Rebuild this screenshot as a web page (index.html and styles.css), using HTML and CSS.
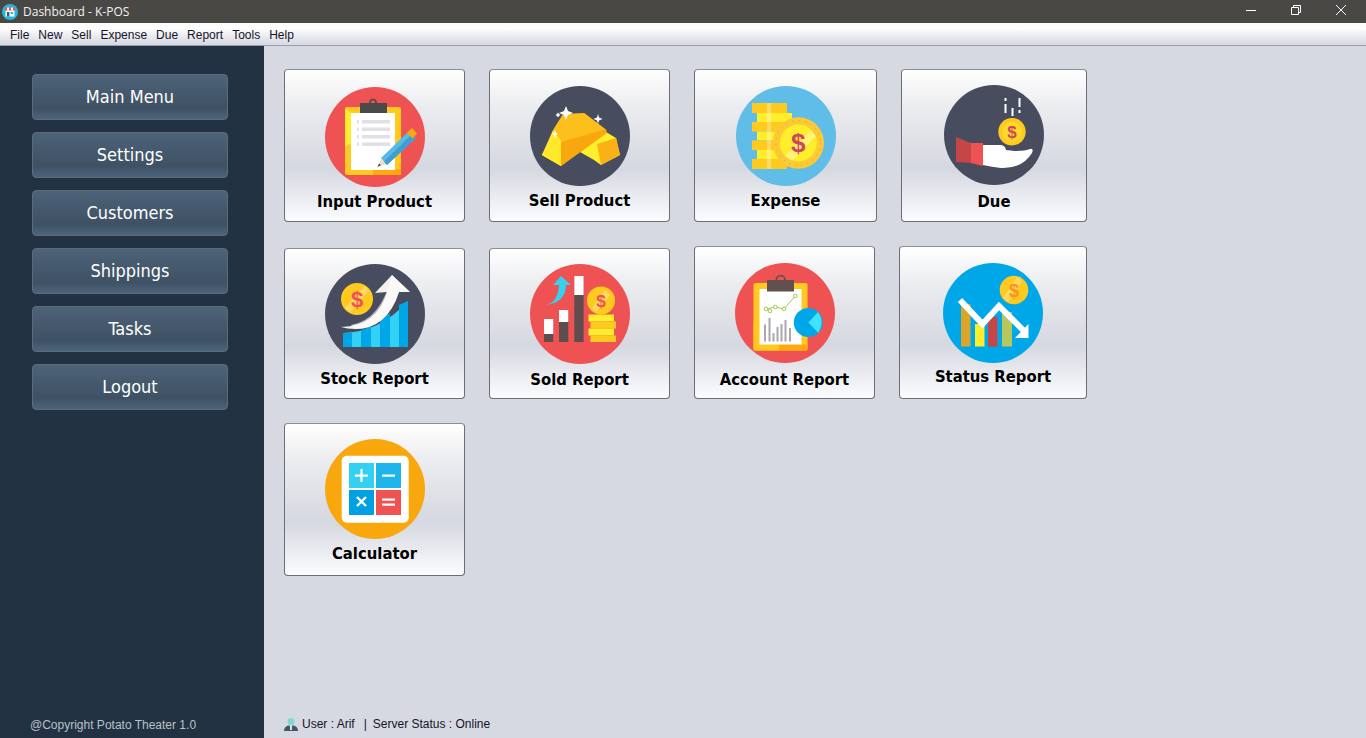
FILE: index.html
```html
<!DOCTYPE html>
<html lang="en">
<head>
<meta charset="utf-8">
<title>Dashboard - K-POS</title>
<link rel="stylesheet" href="styles.css">
</head>
<body>
<div class="app">
  <header class="titlebar">
    <div class="title-left">
      <svg class="app-icon" viewBox="0 0 16 16"><circle cx="8" cy="8" r="8" fill="#22b8d8"/><rect x="3.5" y="6" width="9" height="6.5" fill="#fff"/><rect x="3" y="3.5" width="10" height="3" fill="#ee5253"/><rect x="5" y="3.5" width="2" height="3" fill="#fff"/><rect x="9" y="3.5" width="2" height="3" fill="#fff"/><rect x="5" y="8" width="2.4" height="4.5" fill="#2c5d7a"/><rect x="8.6" y="8" width="2.6" height="2" fill="#22b8d8"/></svg>
      <span class="title-text">Dashboard - K-POS</span>
    </div>
    <div class="win-controls">
      <span class="win-btn"><svg width="12" height="12" viewBox="0 0 12 12"><path d="M1 6.5H11" stroke="#fff" fill="none"/></svg></span>
      <span class="win-btn"><svg width="12" height="12" viewBox="0 0 12 12"><path d="M1.5 3.5H8.5V10.5H1.5ZM3.5 3.5V1.5H10.5V8.5H8.5" stroke="#fff" fill="none"/></svg></span>
      <span class="win-btn"><svg width="12" height="12" viewBox="0 0 12 12"><path d="M1 1L11 11M11 1L1 11" stroke="#fff" fill="none"/></svg></span>
    </div>
  </header>
  <nav class="menubar">
    <span>File</span><span>New</span><span>Sell</span><span>Expense</span><span>Due</span><span>Report</span><span>Tools</span><span>Help</span>
  </nav>
  <div class="content">
    <aside class="sidebar">
      <div class="side-buttons">
        <button class="side-btn">Main Menu</button>
        <button class="side-btn">Settings</button>
        <button class="side-btn">Customers</button>
        <button class="side-btn">Shippings</button>
        <button class="side-btn">Tasks</button>
        <button class="side-btn">Logout</button>
      </div>
      <div class="copyright">@Copyright Potato Theater 1.0</div>
    </aside>
    <main class="main">
      <div class="rows">
        <div class="row">
          <div class="card w181 top18 lab1">
            <svg class="icon" viewBox="0 0 100 100"><circle cx="50" cy="50" r="50" fill="#ee5253"/><rect x="20" y="20" width="56" height="68" rx="2" fill="#ffc91f"/><path d="M20 22V60L26 56V26Z" fill="#ffee2b"/><path d="M48 88V82H76V86Q76 88 74 88Z" fill="#ffa90f"/><rect x="26" y="26" width="44" height="57" fill="#fff"/><circle cx="48" cy="15.5" r="3" fill="none" stroke="#4a4a4a" stroke-width="1.6"/><rect x="35" y="16" width="27" height="10" fill="#4a4a4a"/><g fill="#e0e0e6"><rect x="37" y="33" width="28" height="3.5"/><rect x="37" y="40.500" width="28" height="3.500"/><rect x="37" y="48" width="28" height="3.500"/><rect x="37" y="55.500" width="28" height="3.500"/><rect x="32" y="33" width="2" height="3.500"/><rect x="32" y="40.500" width="2" height="3.500"/><rect x="32" y="48" width="2" height="3.500"/><rect x="32" y="55.500" width="2" height="3.500"/></g><path d="M52.500 80L56 72L62 77Z" fill="#f0dcc8"/><path d="M52.500 80L54 76.500L56 78Z" fill="#4a4a4a"/><path d="M56 71L84 44L91 51L62 78Z" fill="#5bb9e6"/><path d="M59 74.500L86 48L91 51L62 78Z" fill="#3d9fd2"/><path d="M82 46L87 41L92 46.500L87.500 51.500Z" fill="#f8a80c"/></svg>
            <span class="label">Input Product</span>
          </div>
          <div class="card w181 top17 lab1">
            <svg class="icon" viewBox="0 0 100 100"><circle cx="50" cy="50" r="50" fill="#474d5e"/><path d="M50 66L76 46L86 52L90 69L71 79L64 74Z" fill="#ffee2b"/><path d="M71 79L67 58L86 52L90 69Z" fill="#fbb016"/><path d="M28 38L54 27L75 43L76 46L31 80L12 69L23 52Z" fill="#fbb016"/><path d="M12 69L23 44L31 52L31 80Z" fill="#ffee2b"/><path d="M23 44L29 29L38 31L60 27L75 42L31 52Z" fill="#fcc11c" opacity="0"/><path d="M23 44L33 28L54 27L75 43L31 62Z" fill="#fdbf1c"/><path d="M12 69L24 45L32 56L31 80Z" fill="#ffe92a"/><path d="M31 56L76 43L77 47L31 80Z" fill="#f9a70f"/><path d="M36 20L38 25L43 27L38 29L36 34L34 29L29 27L34 25Z" fill="#fff"/><path d="M68 28L69 31.500L72.500 33L69 34.500L68 38L67 34.500L63.500 33L67 31.500Z" fill="#fff"/><path d="M28 26.500L29 28L30.500 29L29 30L28 31.500L27 30L25.500 29L27 28Z" fill="#fff"/><path d="M25 44L26 47L28 48L26 49L25 52L24 49L22 48L24 47Z" fill="#fff"/></svg>
            <span class="label">Sell Product</span>
          </div>
          <div class="card w183 top17 lab1">
            <svg class="icon" viewBox="0 0 100 100"><circle cx="50" cy="50" r="50" fill="#5fbde8"/><rect x="16" y="17" width="35" height="10" fill="#ffca1f"/><rect x="21" y="27" width="35" height="9" fill="#ffee2b"/><rect x="16" y="36" width="35" height="9.500" fill="#ffca1f"/><rect x="21" y="45.500" width="35" height="9" fill="#ffee2b"/><rect x="16" y="54.500" width="35" height="9.500" fill="#ffca1f"/><rect x="21" y="64" width="35" height="9" fill="#ffee2b"/><rect x="16" y="73" width="35" height="10" fill="#ffca1f"/><rect x="31" y="17" width="4" height="66" fill="#fff" opacity=".3"/><circle cx="62.300" cy="57" r="25.700" fill="#fccb33"/><circle cx="62.300" cy="57" r="22.500" fill="none" stroke="#f4a23a" stroke-width="1.200" stroke-dasharray="1.200 5"/><circle cx="62.300" cy="57" r="18.500" fill="#ffee2b"/><path d="M49 70L75 44L80 50L56 75Z" fill="#fff" opacity=".35"/><text x="62.300" y="66" class="dollar d26" fill="#d1475a">$</text></svg>
            <span class="label">Expense</span>
          </div>
          <div class="card w186 top16 lab2">
            <svg class="icon" viewBox="0 0 100 100"><circle cx="50" cy="50" r="50" fill="#474d5e"/><g fill="#fff"><rect x="60.500" y="13" width="2" height="3"/><rect x="60.500" y="19" width="2" height="9"/><rect x="67.500" y="23" width="2" height="8" /><rect x="74.500" y="13" width="2" height="9"/><rect x="74.500" y="25" width="2" height="3"/></g><circle cx="68" cy="46.700" r="13.700" fill="#ffc91f"/><circle cx="68" cy="46.700" r="10" fill="#ffd92a"/><text x="68" y="53" class="dollar d17" fill="#d1475a">$</text><path d="M39 60H56Q61 60 62 65L71 66Q82 66 86 64Q90 63 88 68Q78 84 57 83Q48 82 39 80Z" fill="#fff"/><path d="M12 52V77L27 78V58Z" fill="#c44649"/><path d="M27 58L39 58V81L27 78Z" fill="#ee5253"/></svg>
            <span class="label">Due</span>
          </div>
        </div>
        <div class="row row-end">
          <div class="card w181 short top16 lab3">
            <svg class="icon" viewBox="0 0 100 100"><circle cx="50" cy="50" r="50" fill="#474d5e"/><path d="M18 69Q55 68 83 37V83H18Z" fill="#33d1f5"/><path d="M18 69H27V83H18ZM36 66.500L46 62V83H36ZM55 56L65 49V83H55ZM74 41L83 37V83H74Z" fill="#00a7e8"/><path d="M16 63Q52 62 62 28L50 29L67 11L85 28L74 28Q62 65 30 65Q22 65 16 63Z" fill="#f4f1ea"/><path d="M26 61Q56 56 67 11L85 28L74 28Q62 65 30 65Z" fill="#fff" opacity=".6"/><circle cx="32" cy="35" r="16" fill="#ffc91f"/><path d="M20 44L40 22L44 27L25 48Z" fill="#fff" opacity=".3"/><text x="32" y="43" class="dollar d20" fill="#ee5253">$</text></svg>
            <span class="label">Stock Report</span>
          </div>
          <div class="card w181 short top16 lab4">
            <svg class="icon" viewBox="0 0 100 100"><circle cx="50" cy="50" r="50" fill="#ee5253"/><rect x="14" y="55" width="9.300" height="23" fill="#5f4d4d"/><rect x="14" y="55" width="9.300" height="15" fill="#fff"/><rect x="29" y="46" width="9.300" height="32" fill="#5f4d4d"/><rect x="29" y="46" width="9.300" height="12" fill="#fff"/><rect x="44.300" y="12" width="9.300" height="66" fill="#5f4d4d"/><rect x="44.300" y="12" width="9.300" height="19" fill="#fff"/><path d="M16 41Q28 38 29 21H23L31 12L41 21H36Q36 38 16 41Z" fill="#37d1f0"/><circle cx="71" cy="36.500" r="14" fill="#ffc91f"/><path d="M62 44L75 26L80 31L66 48Z" fill="#fff" opacity=".3"/><text x="71" y="42.500" class="dollar d17" fill="#ee5253">$</text><rect x="58.500" y="50.500" width="25.500" height="7" fill="#ffee2b"/><rect x="60.500" y="57.500" width="25.500" height="7" fill="#ffca1f"/><rect x="58.500" y="64.500" width="25.500" height="7" fill="#ffee2b"/><rect x="60.500" y="71.500" width="25.500" height="6.500" fill="#ffca1f"/></svg>
            <span class="label">Sold Report</span>
          </div>
          <div class="card w181 top17 lab5">
            <svg class="icon" viewBox="0 0 100 100"><circle cx="50" cy="50" r="50" fill="#ee5253"/><rect x="18.500" y="20" width="54" height="67.500" rx="2" fill="#ffc91f"/><path d="M18.500 60L24 56V82H44V87.500H20Q18.500 87.500 18.500 86Z" fill="#ffc91f"/><path d="M44 87.500V81.500H72.500V86Q72.500 87.500 71 87.500Z" fill="#ffa90f"/><rect x="24.500" y="26" width="42" height="55.500" fill="#fff"/><circle cx="45.700" cy="17" r="4.300" fill="#ee5253" stroke="#60504e" stroke-width="1.800"/><rect x="32" y="17" width="27" height="11.500" fill="#60504e"/><path d="M31 46L40.300 44L49 46L60.300 33" fill="none" stroke="#a5c94e" stroke-width="1"/><g fill="#fff" stroke="#a5c94e" stroke-width="1"><circle cx="31" cy="46" r="1.800"/><circle cx="35" cy="48" r="1.800"/><circle cx="40.300" cy="44" r="1.800"/><circle cx="49" cy="46" r="1.800"/><circle cx="60.300" cy="33" r="1.800"/></g><g fill="#a8a8ae"><rect x="29" y="61.500" width="2" height="17"/><rect x="33.500" y="55" width="2" height="23.500"/><rect x="37.500" y="70" width="2" height="8.500"/><rect x="41.500" y="64" width="2" height="14.500"/><rect x="45.500" y="61" width="2" height="17.500"/><rect x="49.500" y="57" width="2" height="21.500"/><rect x="54" y="65" width="2" height="13.500"/></g><circle cx="73.300" cy="59.500" r="14.500" fill="#00a7e8"/><path d="M73.300 59.500L83 49Q90 58 83.500 70Z" fill="#3fe3ff"/></svg>
            <span class="label">Account Report</span>
          </div>
          <div class="card w188 top17 lab6">
            <svg class="icon" viewBox="0 0 100 100"><circle cx="50" cy="50" r="50" fill="#00a7e8"/><circle cx="71" cy="27" r="14.300" fill="#ffc91f"/><path d="M60 35L74 14L79 18L65 39Z" fill="#fff" opacity=".3"/><text x="71" y="33.500" class="dollar d18" fill="#f7931e">$</text><rect x="18" y="41" width="9.500" height="42.500" fill="#dba52c"/><rect x="32" y="61" width="9.500" height="22.500" fill="#ffee2b"/><rect x="45" y="54" width="9.500" height="29.500" fill="#c44649"/><rect x="59" y="49" width="10" height="34.500" fill="#b7c75c"/><path d="M17 37L39.500 61L56 43L83 70" fill="none" stroke="#fff" stroke-width="6"/><path d="M85.500 61V75H72Z" fill="#fff"/></svg>
            <span class="label">Status Report</span>
          </div>
        </div>
        <div class="row">
          <div class="card w181 top16 lab7">
            <svg class="icon" viewBox="0 0 100 100"><circle cx="50" cy="50" r="50" fill="#f8a80c"/><rect x="16.700" y="16.700" width="67" height="67" rx="5" fill="#fff"/><rect x="24" y="24" width="25" height="25" fill="#33cff5"/><rect x="51" y="24" width="25" height="25" fill="#1db5ea"/><rect x="24" y="51" width="25" height="25" fill="#00a0e3"/><rect x="51" y="51" width="25" height="25" fill="#ee5253"/><g fill="#fff"><rect x="30" y="35.500" width="13" height="2.200"/><rect x="35.400" y="30" width="2.200" height="13"/><rect x="57" y="35.500" width="13" height="2.200"/><rect x="57" y="59.500" width="13" height="2.200"/><rect x="57" y="64.500" width="13" height="2.200"/></g><path d="M32 58L41 67M41 58L32 67" stroke="#fff" stroke-width="2.400"/></svg>
            <span class="label">Calculator</span>
          </div>
        </div>
      </div>
      <div class="status">
        <svg class="user-icon" viewBox="0 0 14 14"><path d="M0 14Q0 9 5 8.500H9Q14 9 14 14Z" fill="#4a5468"/><circle cx="7" cy="4.500" r="3.500" fill="#7fd8cf"/><rect x="6" y="8" width="2" height="5" fill="#cfe8e6"/></svg>
        <span>User : Arif</span><span class="sep">|</span><span>Server Status : Online</span>
      </div>
    </main>
  </div>
</div>
</body>
</html>
```
FILE: styles.css
```css
* { box-sizing: border-box; }
html, body { margin: 0; padding: 0; height: 738px; overflow: hidden; }
body { font-family: "Liberation Sans", Arial, sans-serif; font-size: 12px; }
.app { display: flex; flex-direction: column; height: 738px; }

.titlebar { height: 23px; background: #4a4845; display: flex; justify-content: space-between; align-items: center; color: #fff; }
.title-left { display: flex; align-items: center; padding-left: 2px; gap: 5px; }
.app-icon { width: 16px; height: 16px; }
.title-text { font-family: "Open Sans", sans-serif; font-size: 12px; color: #f2f2f2; }
.win-controls { display: flex; padding-right: 3px; }
.win-btn { width: 45px; height: 23px; display: flex; align-items: center; justify-content: center; padding-bottom: 3px; }

.menubar { height: 23px; display: flex; align-items: center; gap: 9px; padding-left: 10px; padding-top: 1px; color: #14142a; background: linear-gradient(#fbfcfc, #ffffff 25%, #e6e8ec 65%, #d6d9e1); border-bottom: 1px solid #9a9ea6; }

.content { flex: 1; display: flex; min-height: 0; }
.sidebar { width: 264px; background: #223242; padding: 28px 32px 6px 30px; display: flex; flex-direction: column; justify-content: space-between; }
.side-buttons { display: flex; flex-direction: column; gap: 12px; padding-left: 2px; }
.side-btn { height: 46px; width: 196px; border: 1px solid #5c6b7a; border-radius: 4px; background: linear-gradient(#4d6379, #3f5164 75%, #4b647b); color: #fff; font-family: "DejaVu Sans", sans-serif; font-stretch: condensed; font-size: 18px; padding: 0 0 2px; }
.copyright { color: #b9c0c8; white-space: nowrap; }

.main { flex: 1; background: #d6d9e1; display: flex; flex-direction: column; justify-content: space-between; padding: 23px 20px 6px; }
.rows { display: flex; flex-direction: column; gap: 24px; }
.row { display: flex; gap: 24px; align-items: flex-start; }
.row-end { align-items: flex-end; }

.card { height: 153px; border: 1px solid #6b6e75; border-top-color: #8c8e94; border-radius: 4px; background: linear-gradient(#ffffff, #ebecef 25%, #d5d8e0 65%, #fbfcfe); display: flex; flex-direction: column; align-items: center; }
.short { height: 151px; }
.w181 { width: 181px; }
.w183 { width: 183px; }
.w186 { width: 186px; }
.w188 { width: 188px; }
.top16 { padding-top: 15px; }
.top17 { padding-top: 16px; }
.top18 { padding-top: 17px; }
.icon { width: 100px; height: 100px; flex: none; }
.label { font-family: "DejaVu Sans", sans-serif; font-stretch: condensed; font-weight: 700; font-size: 16.5px; line-height: 20px; color: #000; white-space: nowrap; margin-top: 5px; }
.lab2 .label { margin-top: 7px; }
.lab3 .label { margin-top: 5px; }
.lab4 .label { margin-top: 6px; }
.lab5 .label { margin-top: 7px; }
.lab6 .label { margin-top: 4px; }
.lab7 .label { margin-top: 5px; }

.dollar { font-family: "Liberation Sans", sans-serif; font-weight: 700; text-anchor: middle; }
.d26 { font-size: 26px; }
.d20 { font-size: 22px; }
.d18 { font-size: 18px; }
.d17 { font-size: 17px; }

.status { display: flex; align-items: center; color: #14142a; padding-left: 0; height: 16px; white-space: nowrap; }
.user-icon { width: 14px; height: 14px; margin-right: 4px; }
.sep { margin: 0 6px 0 9px; }
```
